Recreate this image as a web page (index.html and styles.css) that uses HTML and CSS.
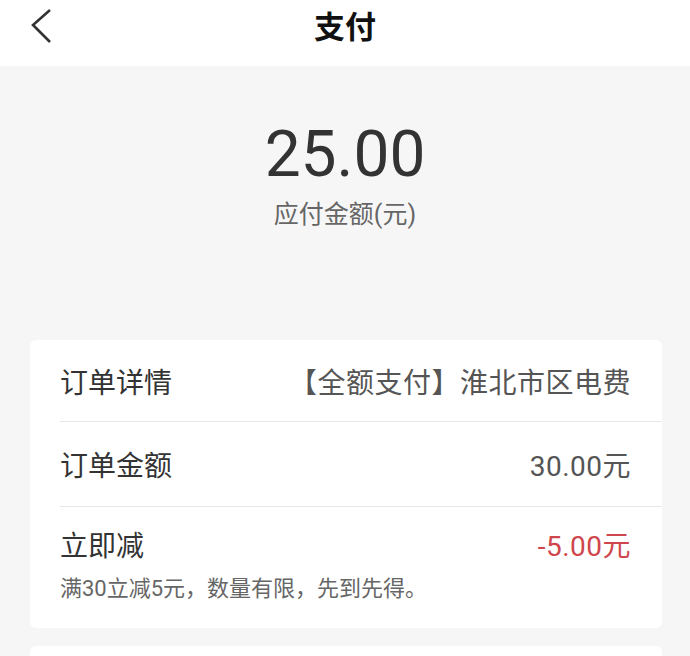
FILE: index.html
```html
<!DOCTYPE html>
<html lang="zh-CN">
<head>
    <meta charset="UTF-8">
    <meta name="viewport" content="width=device-width, initial-scale=1.0">
    <title>支付</title>
    <link rel="stylesheet" href="styles.css">
</head>
<body>

    <div class="header">
        <a class="back" href="#">
            <svg width="24" height="36" viewBox="0 0 24 36">
                <path d="M20 3 L3 18 L20 35" fill="none" stroke="#333" stroke-width="2.6"/>
            </svg>
        </a>
        <h1>支付</h1>
    </div>

    <div class="amount">
        <div class="amount-value">25.00</div>
        <div class="amount-label">应付金额(元)</div>
    </div>

    <div class="card">
        <div class="row">
            <span class="label">订单详情</span>
            <span class="value">【全额支付】淮北市区电费</span>
        </div>
        <div class="row">
            <span class="label">订单金额</span>
            <span class="value">30.00元</span>
        </div>
        <div class="row row-last">
            <div class="row-main">
                <span class="label">立即减</span>
                <span class="value discount">-5.00元</span>
            </div>
            <div class="note">满30立减5元，数量有限，先到先得。</div>
        </div>
    </div>

    <div class="card card-next"></div>

</body>
</html>
```

FILE: styles.css
```css
body {
    margin: 0;
    background-color: #f6f6f6;
    font-family: Roboto, "Noto Sans CJK SC", sans-serif;
    color: #333;
    height: 656px;
    overflow: hidden;
}
.header {
    position: relative;
    height: 66px;
    background-color: #fff;
    display: flex;
    align-items: center;
    justify-content: center;
}
.header h1 {
    margin: 0;
    font-size: 31px;
    font-weight: bold;
    color: #111;
    font-family: "Noto Sans CJK SC", sans-serif;
    margin-top: -18px;
}
.back {
    position: absolute;
    left: 30px;
    top: 7px;
    display: block;
}
.back svg {
    display: block;
}
.amount {
    padding-top: 51px;
    text-align: center;
}
.amount-value {
    font-size: 64px;
    line-height: 76px;
    color: #333;
}
.amount-label {
    margin-top: 6px;
    font-size: 25px;
    line-height: 32px;
    color: #666;
}
.card {
    margin: 109px 28px 0 30px;
    background-color: #fff;
    border-radius: 6px;
}
.row {
    margin-left: 30px;
    padding-right: 31px;
    height: 84px;
    border-bottom: 1px solid #e6e6e6;
    display: flex;
    align-items: center;
    justify-content: space-between;
}
.row:first-child {
    height: 81px;
}
.label {
    font-size: 28px;
    color: #333;
}
.value {
    font-size: 28px;
    color: #555;
    letter-spacing: 0.5px;
}
.discount {
    color: #cf464c;
}
.row-last {
    height: auto;
    border-bottom: none;
    display: block;
    padding-top: 22px;
    padding-bottom: 24px;
}
.row-main {
    display: flex;
    justify-content: space-between;
    align-items: center;
    line-height: 36px;
}
.note {
    margin-top: 9px;
    font-size: 22px;
    line-height: 30px;
    color: #666;
}
.card-next {
    margin-top: 18px;
    height: 40px;
}
```
